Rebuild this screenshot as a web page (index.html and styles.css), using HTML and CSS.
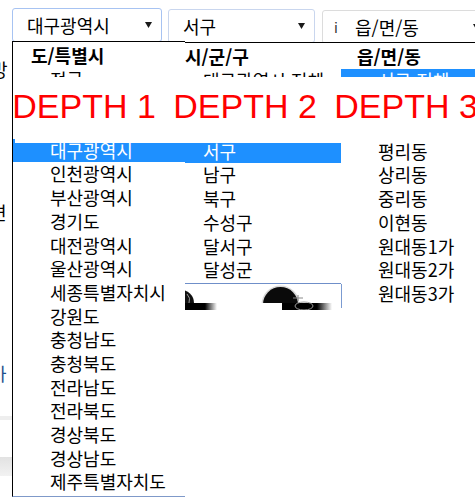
FILE: index.html
```html
<!DOCTYPE html>
<html lang="ko">
<head>
<meta charset="utf-8">
<title>지역 선택</title>
<link rel="stylesheet" href="styles.css">
</head>
<body>
<div class="backdrop">
  <div class="frag f1">방</div>
  <div class="frag f2">련</div>
  <div class="frag f3">가</div>
  <div class="bar b1"></div>
  <div class="bar b2"></div>
</div>

<div class="selects">
  <div class="select s1"><span>대구광역시</span><svg class="arrow" width="7" height="6" viewBox="0 0 7 6"><polygon points="0,0 7,0 3.5,6"/></svg></div>
  <div class="select s2"><span>서구</span><svg class="arrow" width="7" height="6" viewBox="0 0 7 6"><polygon points="0,0 7,0 3.5,6"/></svg></div>
  <div class="select s3"><span class="cut">i</span><span class="grow">읍/면/동</span><svg class="arrow" width="7" height="6" viewBox="0 0 7 6"><polygon points="0,0 7,0 3.5,6"/></svg></div>
</div>

<div class="panel p3">
  <div class="row head">읍/면/동</div>
  <div class="row item sel">서구 전체</div>
  <div class="row item">내당동</div>
  <div class="row item">비산동</div>
  <div class="row item">평리동</div>
  <div class="row item">상리동</div>
  <div class="row item">중리동</div>
  <div class="row item">이현동</div>
  <div class="row item">원대동1가</div>
  <div class="row item">원대동2가</div>
  <div class="row item">원대동3가</div>
</div>

<div class="panel p2">
  <div class="row head">시/군/구</div>
  <div class="row item">대구광역시 전체</div>
  <div class="row item">중구</div>
  <div class="row item">동구</div>
  <div class="row item sel">서구</div>
  <div class="row item">남구</div>
  <div class="row item">북구</div>
  <div class="row item">수성구</div>
  <div class="row item">달서구</div>
  <div class="row item">달성군</div>
</div>

<svg class="picfrag" width="157" height="26" viewBox="0 0 157 26">
  <defs>
    <linearGradient id="g1" x1="0" x2="1" y1="0" y2="0">
      <stop offset="0" stop-color="#000"/>
      <stop offset="1" stop-color="#fff"/>
    </linearGradient>
  </defs>
  <rect x="0" y="0" width="157" height="26" fill="#fff"/>
  <circle cx="-4" cy="19" r="13" fill="#111"/>
  <path d="M2 10 q4 4 2 9" stroke="#999" stroke-width="1" fill="none"/>
  <circle cx="95.5" cy="20.5" r="19" fill="#d8d8d8"/>
  <circle cx="95.5" cy="20.5" r="17.5" fill="#0a0a0a"/>
  <rect x="0" y="19" width="20" height="7" fill="#000"/>
  <rect x="20" y="19" width="12" height="7" fill="url(#g1)"/>
  <rect x="32" y="19" width="65" height="7" fill="#fff"/>
  <rect x="97" y="19" width="35" height="7" fill="#000"/>
  <rect x="132" y="19" width="15" height="7" fill="url(#g1)"/>
  <path d="M108 14 h10 M113 11 v6" stroke="#8a8a8a" stroke-width="1" fill="none"/>
  <ellipse cx="119" cy="22" rx="9" ry="4" stroke="#9a9a9a" stroke-width="1" fill="none"/>
  <path d="M156.5 0 V24" stroke="#7b9bd1" stroke-width="1"/>
</svg>

<div class="panel p1">
  <div class="row head">도/특별시</div>
  <div class="row item">전국</div>
  <div class="row item">서울특별시</div>
  <div class="row item">광주광역시</div>
  <div class="row item sel">대구광역시</div>
  <div class="row item">인천광역시</div>
  <div class="row item">부산광역시</div>
  <div class="row item">경기도</div>
  <div class="row item">대전광역시</div>
  <div class="row item">울산광역시</div>
  <div class="row item">세종특별자치시</div>
  <div class="row item">강원도</div>
  <div class="row item">충청남도</div>
  <div class="row item">충청북도</div>
  <div class="row item">전라남도</div>
  <div class="row item">전라북도</div>
  <div class="row item">경상북도</div>
  <div class="row item">경상남도</div>
  <div class="row item">제주특별자치도</div>
</div>

<div class="depth-band">
  <span class="depth first">DEPTH 1</span>
  <span class="depth">DEPTH 2</span>
  <span class="depth">DEPTH 3</span>
</div>
</body>
</html>
```

FILE: styles.css
```css
html, body {
  margin: 0;
  padding: 0;
  overflow: hidden;
  background: #fff;
}

body {
  position: relative;
  width: 475px;
  height: 498px;
  font-family: "Noto Sans CJK KR", "Noto Sans", sans-serif;
  font-size: 18px;
  color: #000;
}

/* page content behind the open menus */
.backdrop {
  position: absolute;
  left: 0;
  top: 0;
  width: 12px;
  height: 498px;
  overflow: hidden;
  z-index: 0;
}

.frag {
  line-height: 24px;
  height: 24px;
  white-space: nowrap;
  margin-left: -9px;
}

.f1 { margin-top: 57px; }
.f2 { margin-top: 119px; margin-left: -10px; }
.f3 { margin-top: 137px; margin-left: -10px; color: #1d4f8c; }

.bar { width: 12px; }
.b1 { margin-top: 31px; height: 4px; background: #eeeeee; }
.b2 { margin-top: 37px; height: 19px; background: linear-gradient(#e2e2e2, #f2f2f2); }

/* select boxes */
.selects {
  position: relative;
  z-index: 1;
  display: flex;
  align-items: flex-start;
  padding: 8px 0 0 12px;
}

.select {
  box-sizing: border-box;
  flex: none;
  height: 34px;
  display: flex;
  align-items: center;
  justify-content: space-between;
  background: #fff;
  border: 1px solid #dcdcdc;
  border-radius: 3px;
  padding: 0 9px 0 14px;
  white-space: nowrap;
}

.s1 { width: 150px; border-color: #a7c3f2; }
.s2 { width: 147px; margin-left: 6px; margin-top: 1px; border-color: #c9d6ee; }
.s3 { width: 168px; margin-left: 7px; margin-top: 2px; border-color: #dcdcdc; padding-left: 11px; }

.cut {
  display: inline-block;
  width: 21px;
  font-size: 14px;
  color: #333;
}

.grow { flex: 1; }

.arrow { flex: none; fill: #1a1a1a; }

/* open dropdown lists */
.panel {
  position: absolute;
  box-sizing: border-box;
  background: #fff;
  border-top: 1px solid #000;
  overflow: hidden;
}

.row {
  height: 23.7px;
  line-height: 23.7px;
  white-space: nowrap;
}

.head { font-weight: 700; }

.sel {
  background: #1e90ff;
  color: #fff;
}

.p1 {
  left: 12px;
  top: 41px;
  width: 173px;
  border-left: 1px solid #000;
  border-bottom: 1px solid #7f99c9;
  padding: 2px 0;
  z-index: 4;
}
.p1 .head { padding-left: 18px; }
.p1 .item { padding-left: 37px; }

.p2 {
  left: 167px;
  top: 42px;
  width: 174px;
  border-bottom: 1px solid #6f8fc9;
  padding: 2px 0 1px;
  z-index: 3;
}
.p2 .head { padding-left: 18px; }
.p2 .item { padding-left: 36px; }

.p3 {
  left: 340px;
  top: 42px;
  width: 140px;
  padding: 2px 0 1px;
  z-index: 2;
}
.p3 .head { padding-left: 17px; }
.p3 .item { padding-left: 38px; }

.picfrag {
  position: absolute;
  left: 185px;
  top: 284px;
  z-index: 3;
  display: block;
}

/* annotation band */
.depth-band {
  position: absolute;
  left: 15px;
  top: 77px;
  width: 460px;
  height: 66px;
  box-sizing: border-box;
  padding-top: 12px;
  background: #fff;
  display: flex;
  z-index: 6;
}

.depth {
  flex: none;
  width: 161px;
  font-family: "Liberation Sans", Arial, sans-serif;
  font-size: 34px;
  line-height: 34px;
  color: #ff0000;
  white-space: nowrap;
}

.depth.first { margin-left: -2.7px; }
```
